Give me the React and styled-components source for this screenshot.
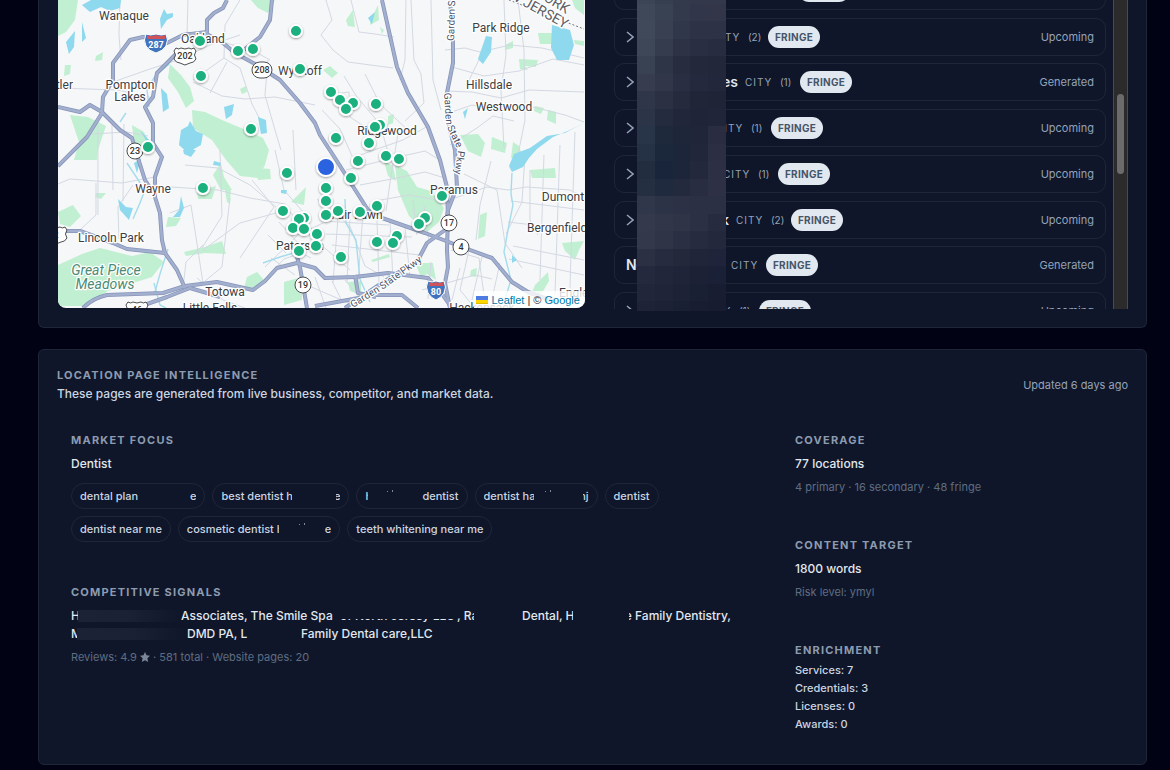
import React from "react";
import styled, { createGlobalStyle } from "styled-components";

const color = {
  page: "#010314",
  panel: "#0f1629",
  line: "#1e2638",
  heading: "#8d9bb0",
  text: "#e2e8f0",
  soft: "#cbd5e1",
  note: "#5f6d83",
};

const GlobalStyle = createGlobalStyle`
  *, *::before, *::after { box-sizing: border-box; }
  body {
    margin: 0;
    background: ${color.page};
    color: ${color.text};
    font-family: Inter, "Liberation Sans", sans-serif;
    font-size: 12px;
    font-weight: 500;
    line-height: 18px;
  }
  h2, h3, p, ul, dl, dd { margin: 0; padding: 0; }
  ul { list-style: none; }
`;

const Page = styled.main`
  display: flex;
  flex-direction: column;
  gap: 21px;
  padding: 0 23px 5px 38px;
`;

const Panel = styled.section`
  background: ${color.panel};
  border: 1px solid ${color.line};
  border-radius: 6px;
  padding: 17px 18px;
`;

const TerritoryPanel = styled(Panel)`
  display: grid;
  grid-template-columns: minmax(0, 1.027fr) minmax(0, 1fr);
  gap: 29px;
  padding: 0 18px 18px;
  border-top: 0;
  border-radius: 0 0 6px 6px;
`;

/* ---------- map ---------- */

const MapFrame = styled.div`
  position: relative;
  height: 309px;
  border: solid ${color.panel};
  border-width: 0 0 1px 1px;
  border-radius: 0 0 9px 9px;
  overflow: hidden;
`;

const MapSvg = styled.svg`
  display: block;
  width: 100%;
  height: 308px;
  font-family: Roboto, sans-serif;
  font-weight: 400;
`;

const Attribution = styled.div`
  position: absolute;
  right: 0;
  bottom: 0;
  display: flex;
  align-items: center;
  gap: 3px;
  height: 17px;
  padding: 0 5px 0 2px;
  background: rgba(255, 255, 255, 0.8);
  color: #333;
  font: 11px/16px "Liberation Sans", sans-serif;
`;

const MapLink = styled.a`
  color: #0078a8;
  text-decoration: none;
`;

const parks = [
  "M58 0H78L75 20 66 32 58 36Z",
  "M70 115 88 117 106 126 98 150 97 160H74L79 142Z",
  "M192 110 205 112 222 120 246 130 263 138 269 150 265 165 258 178 240 176 226 160 212 140 193 128Z",
  "M170 64 181 75 190 87 194 101 186 108 178 92 168 78Z",
  "M65 65 71 65 70 74 64 76Z", "M96 56 103 52 102 60 95 61Z",
  "M132 125 144 132 151 147 142 153 134 143Z",
  "M240 89 246 86 247 92 242 94Z", "M251 0H275L268 13 258 8Z",
  "M58 212 73 205 81 216 70 227 60 224Z",
  "M82 254 100 248 132 256 150 252 164 262 152 277 130 284 108 291 86 306 58 306 58 265Z",
  "M96 193 106 193 101 199 95 197Z", "M184 252 205 247 222 241 226 254 205 253 186 256Z",
  "M168 217 181 218 176 226 166 227Z", "M197 191 216 186 212 199 198 199Z",
  "M256 168 270 169 271 179 258 180Z", "M225 190 231 189 230 204 227 202Z",
  "M247 277 257 272 264 280 255 291 244 288Z", "M284 282 302 277 302 300 284 305Z",
  "M291 202 306 187 304 205Z", "M213 175 221 163 224 177 232 190 221 190Z",
  "M346 20 353 10 355 27 348 26Z", "M370 22 378 5 379 20 370 25Z", "M380 27 384 30 382 34Z",
  "M323 70 330 66 338 73 332 78Z", "M388 116 394 114 393 123 388 125Z",
  "M460 135 478 134 485 143 481 157 468 151Z", "M492 137 507 143 505 153 491 149Z",
  "M538 33 553 33 555 44 540 44Z", "M519 59 538 60 536 67 525 66 528 70 520 69Z",
  "M505 45 513 41 513 48 505 50Z", "M548 110 556 112 556 124 547 120Z",
  "M535 106 544 108 541 114 534 111Z", "M572 0H584V15L575 8Z",
  "M395 165 407 171 417 187 431 191 444 208 439 222 427 232 409 216 398 190Z",
  "M384 161 393 166 396 181 388 176Z", "M415 263 433 263 436 280 427 274 421 277Z",
  "M348 282 361 281 361 295 350 291Z", "M371 260 389 254 390 257 373 262Z",
  "M480 215 487 212 485 236 478 239Z", "M530 170 555 168 556 178 532 178Z",
  "M562 243 584 241 579 250 575 260 565 251Z", "M535 285 548 272 549 281 542 293 530 298Z",
  "M513 142 519 146 524 160 511 158Z", "M574 40 584 41V46L575 44Z", "M471 270 477 268 476 277 470 276Z",
];

const waters = [
  "M82 5 91 0H121L120 8 110 11 101 7 90 12Z", "M82 22 86 38 82 42Z",
  "M66 42 75 31 74 47 69 54Z", "M160 19 164 9 167 14 173 13 173 17 167 20 161 29Z",
  "M157 71 171 59 169 65 157 75Z", "M161 88 167 94 169 108 163 112Z",
  "M181 130 188 126 190 121 196 131 203 134 201 145 194 149 190 155 179 145Z",
  "M224 107 234 104 232 115 226 119Z", "M258 117 266 120 267 133 261 134Z",
  "M140 130 150 141 147 142Z", "M134 163 141 159 137 173Z", "M118 199 126 207 133 208 129 220 120 210Z",
  "M181 196 184 208 180 217 173 217 179 210Z", "M281 190 287 190 286 194 281 193Z",
  "M368 18 375 12 372 24Z", "M486 36 492 37 491 52 483 64 478 59Z",
  "M552 25 570 30 574 45 569 60 557 60 551 48Z",
  "M584 123 570 130 553 137 537 149 529 158 523 167 512 172 509 166 514 154 530 148 547 136 565 133Z",
  "M463 112 468 108 465 119Z", "M512 255 517 260 512 263Z",
  "M183 150 196 150 191 157 184 154Z", "M214 161 221 163 220 166 213 165Z",
];

const majorRoads = [
  "M58 166 87 137 102 113 103 97 113 80V63L130 40 143 37 167 43 183 35 207 32V20L214 13 223 8 227 0",
  "M183 35 205 33 223 43 235 53 257 65 280 80 300 103 315 123 320 135 335 158 368 210 382 218 425 233 462 247 492 258 512 282 528 292 558 303",
  "M272 0 270 20 260 37 240 53",
  "M180 50 173 57 157 73 153 97 145 107 153 123V143L162 157 155 177V197L160 213 162 240 165 253 177 270 185 288",
  "M58 107 80 112 90 105 102 112 120 130 132 138 138 158 145 180 155 195",
  "M450 0 453 33V63L447 93V117L455 150 457 187 448 210 445 230 427 243 418 260 382 283 345 308",
  "M382 0 397 67 408 93 428 127 440 160 447 187 448 217 447 250 448 267 445 283 450 308",
  "M83 308Q93 298 107 295L163 293 185 286 217 282 253 290 265 281 277 268 297 263 315 268 325 278 355 277 388 273 428 278 440 291 452 308",
  "M136 308 167 297 190 288 207 293 220 297",
  "M62 231H80L113 243 127 249 165 253",
  "M295 250 300 267 307 308", "M315 306 375 295 402 295 418 308", "M355 275 358 293 376 297",
];

const streets = [
  "M120 0 119 35 121 60", "M58 88 118 90 153 98", "M113 82 150 69 178 60 210 45 240 35",
  "M98 125V215", "M112 125 113 190", "M124 124 123 201", "M92 134 127 132 148 136",
  "M58 184 70 179 122 183 155 177", "M96 183 96 215 80 230", "M133 185 118 207 119 239",
  "M170 213 191 205 198 250 203 283", "M220 150 222 216 202 248", "M185 165 218 168 250 185 276 207",
  "M155 186 218 190 250 198 285 204", "M193 80 224 58 240 68 252 104 266 131", "M210 93 227 62",
  "M193 82 222 96 245 99 275 97 315 105", "M224 58 225 25 240 0", "M188 0 187 36",
  "M222 42 252 50 270 60", "M268 60 265 95 275 130 281 150", "M275 150 284 190 304 213",
  "M252 180 274 207 260 228 240 258", "M203 250 240 223 276 213", "M293 130 296 190",
  "M230 198 222 267 205 281", "M197 278 223 300 245 308", "M183 288 186 262 203 245",
  "M260 285 284 259 301 253 311 258", "M271 258 295 275", "M265 267 298 235 323 223",
  "M326 0 332 20 321 35 333 50 348 62 393 68", "M351 0 359 32 375 34 394 37",
  "M406 0 405 60 400 80", "M411 0 414 60 421 74 424 103 405 121", "M431 0 433 80 441 110",
  "M445 50 465 48 480 52 510 45 542 48 584 58", "M452 67 484 76 519 71 553 59 584 65",
  "M468 82 479 60 492 38", "M504 0 506 55 501 90 504 148", "M518 0 524 50 525 120 517 160",
  "M449 113 472 105 500 111 533 107 565 115 584 122", "M446 91 472 92 501 98 529 90 584 92",
  "M450 145 477 128 493 116 514 121", "M455 198 487 187 508 190 526 187 570 190 584 197",
  "M464 174 497 190 505 243 522 268", "M491 161 480 205 476 240", "M525 156 522 202 506 234",
  "M530 170V220L538 235", "M544 155 540 280", "M560 145 555 295", "M575 132 570 288",
  "M511 201 584 210", "M508 222 584 231", "M513 246 584 260", "M509 259 584 275",
  "M328 95 349 92 350 117 365 127 398 130", "M322 110 340 129 353 158",
  "M344 76 357 97 380 124 390 159", "M365 74 380 104 410 132", "M398 134 391 176 386 211",
  "M352 158 377 149 403 140 428 126", "M346 170 389 159 425 151 440 160",
  "M360 185 397 178 425 172 445 178", "M375 201 409 195 444 201",
  "M317 199 350 226 365 266 384 277", "M323 221 389 225", "M326 234 412 237", "M332 245 420 255",
  "M338 218 333 283", "M350 218 347 283", "M363 213 358 283", "M377 219 379 282",
  "M390 220 393 280", "M405 227 410 277", "M413 200 417 235", "M424 206 429 242",
  "M318 242 350 270", "M268 235 286 253", "M279 222 300 245", "M290 212 311 236",
  "M451 250 479 258 484 295 522 308", "M431 262 428 299", "M460 268 452 300",
  "M469 250 460 290 475 308", "M482 257 472 300", "M500 263 490 308", "M422 290 475 275 492 279",
  "M309 286 351 304", "M315 277 326 308", "M332 281 343 303", "M345 280 360 298",
];

const streams = [
  "M157 73 147 89 149 107", "M127 163 145 190 140 203 133 219", "M154 283 160 305 166 308",
  "M168 249 160 274 155 292", "M345 199 346 223 356 240 360 279 370 302", "M512 173 511 194 513 205 508 230 504 252 511 280 505 299",
  "M263 263 280 257 297 252", "M120 122 126 113",
];

const places = [
  ["Wanaque", 124, 20], ["Oakland", 203, 43], ["Pompton", 130, 89], ["Lakes", 130, 101],
  ["Wyckoff", 300, 75], ["Park Ridge", 501, 32], ["Hillsdale", 489, 89], ["Westwood", 504, 111],
  ["Ridgewood", 387, 135], ["Wayne", 153, 193], ["Lincoln Park", 111, 242], ["Totowa", 225, 296],
  ["Little Falls", 210, 312], ["Paterson", 300, 250], ["Paramus", 454, 194], ["Fair Lawn", 357, 219],
  ["Dumont", 563, 201], ["Hackensack", 482, 312],
];

const pins = [
  [200, 41], [238, 51], [253, 49], [296, 31], [300, 69], [201, 76], [251, 129], [148, 147],
  [203, 188], [331, 92], [353, 103], [340, 100], [346, 109], [376, 104], [380, 125], [375, 127],
  [336, 138], [369, 143], [358, 161], [386, 156], [399, 159], [351, 178], [287, 173], [326, 188],
  [326, 201], [326, 215], [338, 211], [360, 212], [377, 206], [283, 211], [304, 218], [299, 219],
  [293, 228], [304, 229], [317, 234], [316, 246], [299, 251], [341, 257], [377, 242], [397, 236],
  [393, 243], [425, 218], [419, 224], [442, 196],
];

const RouteCircle = ({ x, y, n }) => (
  <g>
    <rect x={x - (n.length > 2 ? 10 : 8)} y={y - 8} width={n.length > 2 ? 20 : 16} height="16" rx="8" fill="#fff" stroke="#4b4d50" />
    <text x={x} y={y + 3} textAnchor="middle" fontSize="9" fontWeight="500" fill="#333">{n}</text>
  </g>
);

const UsShield = ({ x, y, n }) => (
  <g>
    <path d={`M${x - 9} ${y - 8}q3 2 5 0 4 2 8 0 2 2 5 0l2 3q-3 4 0 8-2 4-6 4l-5 2-5-2q-4 0-6-4 3-4 0-8Z`} fill="#fff" stroke="#4b4d50" />
    <text x={x} y={y + 3} textAnchor="middle" fontSize="9" fontWeight="500" fill="#333">{n}</text>
  </g>
);

const InterstateShield = ({ x, y, n }) => {
  const w = n.length > 2 ? 11 : 9;
  return (
    <g>
      <path d={`M${x - w + 1} ${y - 9}q4 2 ${w - 1} 0 ${w - 5} 2 ${w - 1} 0 3 6 0 12-3 5-${w - 1} 7-${w - 4}-2-${w - 1}-7-3-6 0-12Z`} fill="#3f73bd" stroke="#fff" />
      <path d={`M${x - w + 2} ${y - 8}q4 2 ${w - 2} 0 ${w - 5} 2 ${w - 2} 0v4H${x - w + 2}Z`} fill="#cf5359" />
      <text x={x} y={y + 5} textAnchor="middle" fontSize="9" fontWeight="700" fill="#fff">{n}</text>
    </g>
  );
};

function TerritoryMap() {
  return (
    <MapFrame>
      <MapSvg viewBox="58 0 527 308" preserveAspectRatio="xMidYMid slice" role="img" aria-label="Location coverage map">
        <defs>
          <path id="parkway-top" d="M454 41 456 -30" />
          <path id="parkway-mid" d="M444 93 446 125 458 150 454 178" />
          <path id="parkway-low" d="M353 308 385 288 421 262" />
          <filter id="pin-shadow" x="-40%" y="-40%" width="180%" height="180%">
            <feDropShadow dx="0" dy="1" stdDeviation="1.2" floodOpacity="0.4" />
          </filter>
        </defs>
        <rect x="0" y="-40" width="700" height="400" fill="#f6f7f8" />
        <g fill="#c1efd1">{parks.map((d) => <path key={d} d={d} />)}</g>
        <g fill="none" stroke="#d3d8e3" strokeWidth="1" strokeLinejoin="round">
          {streets.map((d) => <path key={d} d={d} />)}
        </g>
        <g fill="#8fd9ef">{waters.map((d) => <path key={d} d={d} />)}</g>
        <g fill="none" stroke="#a5dcec" strokeWidth="1.4">{streams.map((d) => <path key={d} d={d} />)}</g>
        <g fill="none" stroke="#8795ba" strokeWidth="4" strokeLinejoin="round">
          {majorRoads.map((d) => <path key={d} d={d} />)}
        </g>
        <g fill="none" stroke="#a3afce" strokeWidth="2.4" strokeLinejoin="round">
          {majorRoads.map((d) => <path key={d} d={d} />)}
        </g>
        <path d="M509 0 584 29" fill="none" stroke="#777" strokeDasharray="2 2" />

        <InterstateShield x={156} y={43} n="287" />
        <InterstateShield x={436} y={290} n="80" />
        <UsShield x={185} y={56} n="202" />
        <UsShield x={56} y={235} n="2" />
        <UsShield x={137} y={310} n="46" />
        <RouteCircle x={262} y={70} n="208" />
        <RouteCircle x={135} y={151} n="23" />
        <RouteCircle x={449} y={223} n="17" />
        <RouteCircle x={461} y={247} n="4" />
        <RouteCircle x={303} y={285} n="19" />

        <g fill="#3c4043" stroke="#fff" strokeWidth="2.5" paintOrder="stroke" strokeLinejoin="round" fontSize="12">
          <g textAnchor="middle">
            {places.map(([name, x, y]) => <text key={name} x={x} y={y}>{name}</text>)}
          </g>
          <text x="73" y="89" textAnchor="end">Butler</text>
          <text x="527" y="232">Bergenfield</text>
          <text x="559" y="297">Englewood</text>
          <g fontSize="10" fill="#4b5368">
            <text><textPath href="#parkway-top">Garden State</textPath></text>
            <text><textPath href="#parkway-mid">Garden State Pkwy</textPath></text>
            <text><textPath href="#parkway-low">Garden State Pkwy</textPath></text>
          </g>
          <g fontSize="14" fill="#5c6065" textAnchor="end">
            <text transform="translate(566 14) rotate(31)">NEW YORK</text>
            <text transform="translate(565 29) rotate(29)">NEW JERSEY</text>
          </g>
          <g fontSize="14" fontStyle="italic" fill="#4b8a74" textAnchor="middle">
            <text x="106" y="275">Great Piece</text>
            <text x="105" y="289">Meadows</text>
          </g>
        </g>

        <g fill="#1ab07f" stroke="#fff" strokeWidth="2" filter="url(#pin-shadow)">
          {pins.map(([x, y]) => <circle key={`${x}-${y}`} cx={x} cy={y} r="6" />)}
          <circle cx="326" cy="167" r="9" fill="#2962e0" />
        </g>
      </MapSvg>
      <Attribution>
        <svg width="12" height="8" viewBox="0 0 12 8" aria-hidden="true">
          <path fill="#4C7BE1" d="M0 0h12v4H0z" />
          <path fill="#FFD500" d="M0 4h12v3H0z" />
          <path fill="#E0BC00" d="M0 7h12v1H0z" />
        </svg>
        <MapLink href="#leaflet">Leaflet</MapLink>
        <span>| ©</span>
        <MapLink href="#google">Google</MapLink>
      </Attribution>
    </MapFrame>
  );
}

/* ---------- location list ---------- */

const ListArea = styled.div`
  position: relative;
  display: flex;
  gap: 7px;
  height: 309px;
`;

const ListViewport = styled.div`
  flex: 1;
  min-width: 0;
  overflow: hidden;
`;

const Rows = styled.ul`
  display: flex;
  flex-direction: column;
  justify-content: space-between;
  height: 358px;
  margin-top: -28px;
`;

const Row = styled.button`
  display: flex;
  align-items: center;
  gap: 7px;
  width: 100%;
  height: 38px;
  padding: 0 11px;
  border: 1px solid ${color.line};
  border-radius: 10px;
  background: transparent;
  color: #94a3b8;
  font: 11px/16px Inter, sans-serif;
  text-align: left;
`;

const Chevron = styled.svg`
  flex: none;
  width: 8px;
  height: 12px;
  fill: none;
  stroke: #94a3b8;
  stroke-width: 1.5;
`;

const Name = styled.span`
  flex: none;
  width: ${(p) => p.$w}px;
  color: ${color.text};
  font-size: 14px;
  font-weight: 600;
  text-align: ${(p) => (p.$start ? "left" : "right")};
`;

const Kind = styled.span`
  width: 28px;
  letter-spacing: 1px;
  font-size: 10px;
`;

const Count = styled.span`
  width: 13px;
  font-size: 10px;
  white-space: nowrap;
`;

const Badge = styled.span`
  padding: 3px 7px;
  border-radius: 11px;
  background: ${color.text};
  color: #475569;
  font-size: 10px;
  font-weight: 700;
  letter-spacing: 0.03em;
`;

const Status = styled.span`
  margin-left: auto;
`;

const Track = styled.div`
  flex: none;
  width: 15px;
  padding: 94px 3px 0;
  border: solid #4b4b4d;
  border-width: 0 1px;
  background: #2b2b2b;
`;

const Thumb = styled.div`
  height: 80px;
  border-radius: 4px;
  background: #6b6b6b;
`;

const Mosaic = styled.div`
  position: absolute;
  top: 0;
  left: 23px;
  width: 89px;
  height: 311px;
  overflow: hidden;
`;

const MosaicGrid = styled.div`
  display: grid;
  grid-template-columns: repeat(5, 1fr);
  grid-template-rows: repeat(19, 1fr);
  height: 333px;
  margin-top: -14px;
`;

const Cell = styled.i`
  background: ${(p) => p.$c};
`;

const mosaicRows = [
  "3b4555 363f50 333a4c 33384b 34384b",
  "3e4858 394253 333a4c 31364a 333649",
  "3f4959 384051 31374a 2d3246 2e3246",
  "3d4757 343c4d 2d3345 292e42 272c40",
  "394253 2e3547 272c3f 23283b 22273a",
  "373c4e 313649 2a2e42 25293d 23273b",
  "303649 2b3043 252a3d 212538 1f2437",
  "2c3448 252b3f 21263a 1f2438 20253a",
  "283448 1f293c 1e263a 20253a 2a2d42",
  "253145 1b273a 1c2539 21263b 2c2f44",
  "222d40 19253a 1c2539 23283c 2d3045",
  "252f42 202a3e 242a3e 292d42 2e3146",
  "31374a 2d3346 2c3145 2c3044 2c3044",
  "35394c 323649 303447 2c3044 272b3f",
  "34384b 303447 2b2f43 272b3f 24283d",
  "2b3043 272b3f 23283b 212539 20243a",
  "24293d 21263a 1f2438 1c2135 1a2035",
  "21263a 1f2438 1d2237 1a2034 181d32",
  "1e2338 1c2136 1a2034 181d32 171c31",
];

const locations = [
  { w: 95, count: "(1)", status: "Upcoming" },
  { w: 65, count: "(2)", status: "Upcoming" },
  { w: 97, name: "es", count: "(1)", status: "Generated" },
  { w: 68, count: "(1)", status: "Upcoming" },
  { w: 75, count: "(1)", status: "Upcoming" },
  { w: 88, name: "k", count: "(2)", status: "Upcoming" },
  { w: 98, name: "Ne", leaf: true, status: "Generated" },
  { w: 56, count: "(1)", status: "Upcoming" },
];

function LocationList() {
  return (
    <ListArea>
      <ListViewport>
        <Rows>
          {locations.map((l, i) => (
            <li key={i}>
              <Row type="button">
                {!l.leaf && <Chevron viewBox="0 0 8 12" aria-hidden="true"><path d="M1 1 7 6 1 11" /></Chevron>}
                <Name $w={l.w} $start={l.leaf}>{l.name}</Name>
                <Kind>CITY</Kind>
                {l.count && <Count>{l.count}</Count>}
                <Badge>FRINGE</Badge>
                <Status>{l.status}</Status>
              </Row>
            </li>
          ))}
        </Rows>
      </ListViewport>
      <Track><Thumb /></Track>
      <Mosaic aria-hidden="true">
        <MosaicGrid>
          {mosaicRows.join(" ").split(" ").map((c, i) => <Cell key={i} $c={`#${c}`} />)}
        </MosaicGrid>
      </Mosaic>
    </ListArea>
  );
}

/* ---------- intelligence panel ---------- */

const PanelHead = styled.header`
  display: flex;
  align-items: center;
  justify-content: space-between;
  margin-bottom: 15px;
`;

const Title = styled.h2`
  color: ${color.heading};
  font-size: 11px;
  font-weight: 700;
  line-height: 16px;
  letter-spacing: 0.11em;
  text-transform: uppercase;
`;

const Lead = styled.p`
  margin-top: 2px;
  color: ${color.soft};
`;

const Updated = styled.span`
  color: #94a3b8;
  font-size: 11px;
  font-weight: 400;
`;

const Columns = styled.div`
  display: grid;
  grid-template-columns: minmax(0, 2fr) minmax(0, 1fr);
  gap: 30px;
`;

const Stack = styled.div`
  display: flex;
  flex-direction: column;
  gap: 14px;
`;

const Block = styled.section`
  padding: 14px;
`;

const Value = styled.p`
  margin-top: 7px;
`;

const Note = styled.p`
  margin-top: 6px;
  color: ${color.note};
  font-size: 11px;
  font-weight: 400;
  line-height: 16px;
`;

const Chips = styled.ul`
  display: flex;
  flex-wrap: wrap;
  gap: 7px;
  margin-top: 10px;
`;

const Chip = styled.li`
  display: flex;
  height: 26px;
  padding: 0 8px;
  border: 1px solid ${color.line};
  border-radius: 13px;
  color: ${color.soft};
  font-size: 11px;
  line-height: 24px;
`;

/* A run of text whose box may be narrower or wider than its letters. */
const Piece = styled.span`
  display: flex;
  flex: none;
  width: ${(p) => (p.$w ? `${p.$w}px` : "auto")};
  justify-content: ${(p) => (p.$end ? "flex-end" : "flex-start")};
  overflow: hidden;
  white-space: pre;
`;

const Gap = styled.span`
  flex: none;
  width: ${(p) => p.$w}px;
`;

/* A blanked run where only two letter tips still show. */
const TipGap = styled(Gap)`
  background:
    linear-gradient(#7d879a, #7d879a) ${(p) => p.$at}px 7px / 1px 1px no-repeat,
    linear-gradient(#7d879a, #7d879a) ${(p) => p.$at + 5}px 6px / 1px 2px no-repeat;
`;

const Smudge = styled(Gap)`
  height: 12px;
  margin-top: 3px;
  background: linear-gradient(90deg, #1b2236, #1a2135 50%, ${color.panel});
`;

const Names = styled.div`
  margin-top: 7px;
`;

const NameLine = styled.p`
  display: flex;
`;

const HalfHidden = styled(Piece)`
  position: relative;

  &::after {
    content: "";
    position: absolute;
    inset: 0 0 6px 0;
    background: ${color.panel};
  }
`;

const Facts = styled.ul`
  margin-top: 3px;
  color: ${color.soft};
  font-size: 11px;
`;

const Star = styled.svg`
  width: 10px;
  height: 10px;
  fill: #7b8799;
  vertical-align: -1px;
`;

export default function App() {
  return (
    <>
      <GlobalStyle />
      <Page>
        <TerritoryPanel>
          <TerritoryMap />
          <LocationList />
        </TerritoryPanel>

        <Panel>
          <PanelHead>
            <div>
              <Title>Location page intelligence</Title>
              <Lead>These pages are generated from live business, competitor, and market data.</Lead>
            </div>
            <Updated>Updated 6 days ago</Updated>
          </PanelHead>

          <Columns>
            <Stack>
              <Block>
                <Title as="h3">Market focus</Title>
                <Value>Dentist</Value>
                <Chips>
                  <Chip><Piece $w={110}>dental plan</Piece><Piece>e</Piece></Chip>
                  <Chip><Piece $w={71}>best dentist h</Piece><Gap $w={44} /><Piece $w={4} $end>e</Piece></Chip>
                  <Chip><Piece $w={3}>h</Piece><TipGap $w={54} $at={19} /><Piece>dentist</Piece></Chip>
                  <Chip><Piece $w={50}>dentist ha</Piece><TipGap $w={49} $at={11} /><Piece $w={6} $end>nj</Piece></Chip>
                  <Chip>dentist</Chip>
                  <Chip>dentist near me</Chip>
                  <Chip><Piece $w={92}>cosmetic dentist h</Piece><TipGap $w={46} $at={20} /><Piece>e</Piece></Chip>
                  <Chip>teeth whitening near me</Chip>
                </Chips>
              </Block>
              <Block>
                <Title as="h3">Competitive signals</Title>
                <Names>
                  <NameLine>
                    <Piece $w={7}>H</Piece><Smudge $w={103} />
                    <Piece $w={159}>Associates, The Smile Spa</Piece>
                    <HalfHidden $w={117}>of North Jersey LLC</HalfHidden>
                    <Piece $w={17}>, Ra</Piece><Gap $w={48} />
                    <Piece $w={51}>Dental, H</Piece><Gap $w={56} />
                    <Piece $w={102} $end>e Family Dentistry,</Piece>
                  </NameLine>
                  <NameLine>
                    <Piece $w={6}>M</Piece><Smudge $w={110} />
                    <Piece $w={114}>DMD PA, L</Piece>
                    <Piece>Family Dental care,LLC</Piece>
                  </NameLine>
                </Names>
                <Note>
                  Reviews: 4.9{" "}
                  <Star viewBox="0 0 24 24" aria-label="stars"><path d="M12 0l3.700 8 8.300 1-6.200 5.800L19.500 24 12 19.500 4.500 24l1.700-9.200L0 9l8.300-1z" /></Star>
                  {" "}· 581 total · Website pages: 20
                </Note>
              </Block>
            </Stack>

            <Stack>
              <Block>
                <Title as="h3">Coverage</Title>
                <Value>77 locations</Value>
                <Note>4 primary · 16 secondary · 48 fringe</Note>
              </Block>
              <Block>
                <Title as="h3">Content target</Title>
                <Value>1800 words</Value>
                <Note>Risk level: ymyl</Note>
              </Block>
              <Block>
                <Title as="h3">Enrichment</Title>
                <Facts>
                  <li>Services: 7</li>
                  <li>Credentials: 3</li>
                  <li>Licenses: 0</li>
                  <li>Awards: 0</li>
                </Facts>
              </Block>
            </Stack>
          </Columns>
        </Panel>
      </Page>
    </>
  );
}
